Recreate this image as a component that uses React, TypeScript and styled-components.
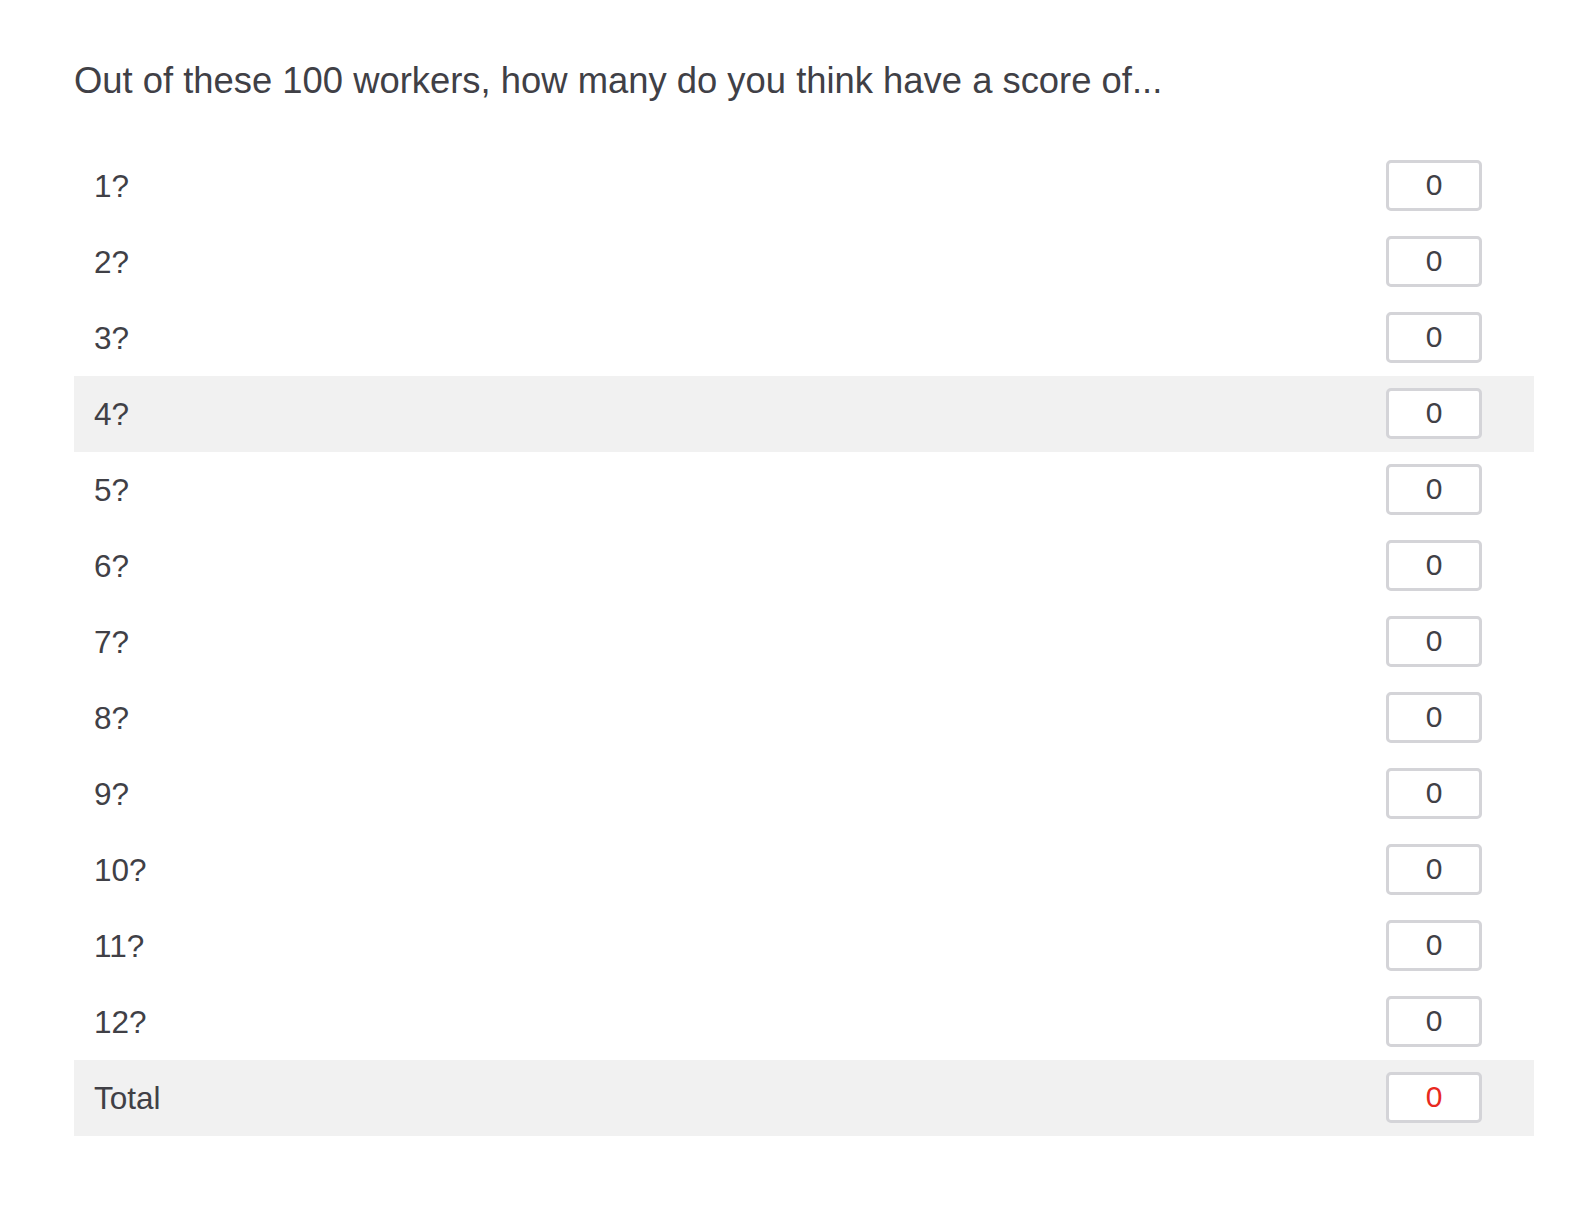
import React from "react";
import styled, { createGlobalStyle } from "styled-components";

const GlobalStyle = createGlobalStyle`
  html, body {
    margin: 0;
    padding: 0;
    background: #ffffff;
    font-family: "Liberation Sans", Arial, Helvetica, sans-serif;
  }
`;

const Page = styled.div`
  padding: 60px 0 0 74px;
  width: 1460px;
`;

const Heading = styled.h1`
  margin: 0 0 47px 0;
  font-size: 36.4px;
  line-height: 41px;
  font-weight: 400;
  color: #404046;
`;

const Table = styled.div`
  display: flex;
  flex-direction: column;
`;

const Row = styled.div<{ $shaded?: boolean }>`
  display: flex;
  align-items: center;
  justify-content: space-between;
  height: 76px;
  padding: 0 52px 0 20px;
  background: ${(p) => (p.$shaded ? "#f1f1f1" : "transparent")};
`;

const Label = styled.span`
  font-size: 31.5px;
  color: #404046;
`;

const NumberBox = styled.input<{ $alert?: boolean }>`
  box-sizing: border-box;
  width: 96px;
  height: 51px;
  margin-top: -2px;
  border: 3px solid #d4d4d8;
  border-radius: 5px;
  background: #ffffff;
  text-align: center;
  font-family: "Liberation Sans", Arial, Helvetica, sans-serif;
  font-size: 30px;
  color: ${(p) => (p.$alert ? "#e8291e" : "#404046")};
  padding: 0;
  outline: none;
`;

const scores = Array.from({ length: 12 }, (_, i) => i + 1);

export default function App() {
  return (
    <>
      <GlobalStyle />
      <Page>
        <Heading>Out of these 100 workers, how many do you think have a score of...</Heading>
        <Table>
          {scores.map((s) => (
            <Row key={s} $shaded={s === 4}>
              <Label>{s}?</Label>
              <NumberBox readOnly value="0" />
            </Row>
          ))}
          <Row $shaded>
            <Label>Total</Label>
            <NumberBox readOnly value="0" $alert />
          </Row>
        </Table>
      </Page>
    </>
  );
}
